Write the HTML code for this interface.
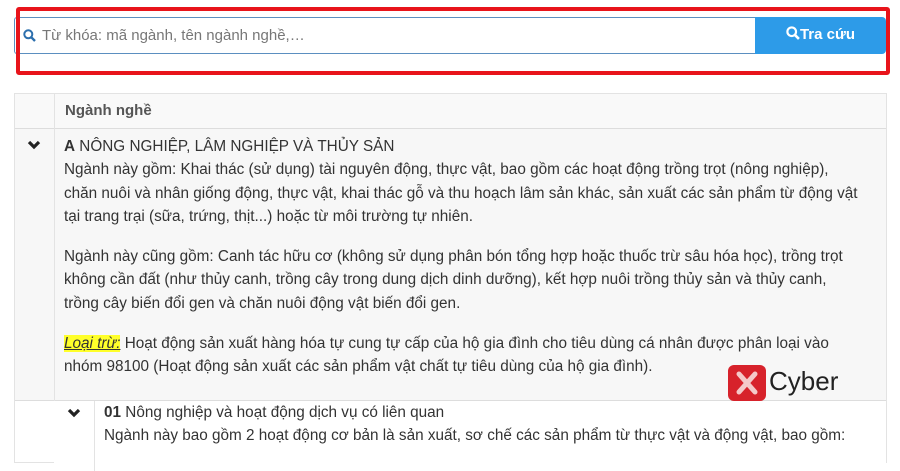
<!DOCTYPE html>
<html><head><meta charset="utf-8"><style>
*{box-sizing:border-box;margin:0;padding:0}
body{width:900px;height:450px;overflow:hidden;background:#fff;font-family:"Liberation Sans",Arial,sans-serif;color:#333;position:relative}
.red{position:absolute;left:16px;top:7px;width:874px;height:68px;border:4px solid #e8141b;border-radius:3px}
.inp{position:absolute;left:14px;top:17px;width:742px;height:37px;border:1px solid #5b8fc0;border-right:none;border-radius:3px 0 0 3px;background:#fff}
.inp span{position:absolute;left:27px;top:9px;font-size:15px;color:#777}
.btn{position:absolute;left:755px;top:17px;width:131px;height:37px;background:#2d9be8;border-radius:0 4px 4px 0;color:#fff;font-size:15px;font-weight:bold;text-align:center;line-height:36px}
.tbl{position:absolute;left:14px;top:93px;width:873px;height:370px;border:1px solid #e3e3e3}
.hd{position:absolute;left:0;top:0;width:871px;height:35px;background:#f9f9f9;border-bottom:1px solid #ddd}
.hd b{position:absolute;left:50px;top:8px;font-size:15px;color:#555}
.vl{position:absolute;left:39px;top:0;width:1px;height:307px;background:#e3e3e3}
.rowA{position:absolute;left:0;top:35px;width:871px;height:272px;background:#f7f7f7;border-bottom:1px solid #ddd}
.txt{position:absolute;left:49px;top:6px;width:812px;font-size:15.3px;line-height:23.3px}
.txt p{margin-bottom:17px}
.chev{position:absolute}
mark{background:#ffff2a;font-style:italic;text-decoration:underline;color:#333}
.rowB{position:absolute;left:39px;top:307px;width:832px;height:70px;background:#fff}
.vl2{position:absolute;left:40px;top:0;width:1px;height:70px;background:#e3e3e3}
.logo{position:absolute;left:728px;top:365px;width:38px;height:36px;background:#d7222b;border-radius:6px}
.cy{position:absolute;left:769px;top:366px;font-size:26px;color:#222;font-family:"Liberation Sans",sans-serif}
</style></head><body>
<div class="inp"><svg style="position:absolute;left:8px;top:11px" width="13" height="13" viewBox="0 0 13 13"><circle cx="5.3" cy="5.3" r="4" fill="none" stroke="#2c6fad" stroke-width="2"/><path d="M8.2 8.2L12 12" stroke="#2c6fad" stroke-width="2.4"/></svg><span>Từ khóa: mã ngành, tên ngành nghề,…</span></div>
<div class="btn"><svg style="vertical-align:-1px" width="14" height="14" viewBox="0 0 13 13"><circle cx="5.3" cy="5.3" r="4" fill="none" stroke="#fff" stroke-width="2"/><path d="M8.2 8.2L12 12" stroke="#fff" stroke-width="2.4"/></svg>Tra cứu</div>
<div class="red"></div>
<div class="tbl">
<div class="hd"><b>Ngành nghề</b></div>
<div class="rowA">
<svg class="chev" style="left:12px;top:11px" width="14" height="10" viewBox="0 0 14 10"><path d="M2 2L7 7L12 2" fill="none" stroke="#222" stroke-width="3.2"/></svg>
<div class="txt">
<p><b>A</b> NÔNG NGHIỆP, LÂM NGHIỆP VÀ THỦY SẢN<br>Ngành này gồm: Khai thác (sử dụng) tài nguyên động, thực vật, bao gồm các hoạt động trồng trọt (nông nghiệp),<br>chăn nuôi và nhân giống động, thực vật, khai thác gỗ và thu hoạch lâm sản khác, sản xuất các sản phẩm từ động vật<br>tại trang trại (sữa, trứng, thịt...) hoặc từ môi trường tự nhiên.</p>
<p>Ngành này cũng gồm: Canh tác hữu cơ (không sử dụng phân bón tổng hợp hoặc thuốc trừ sâu hóa học), trồng trọt<br>không cần đất (như thủy canh, trồng cây trong dung dịch dinh dưỡng), kết hợp nuôi trồng thủy sản và thủy canh,<br>trồng cây biến đổi gen và chăn nuôi động vật biến đổi gen.</p>
<p><mark>Loại trừ:</mark> Hoạt động sản xuất hàng hóa tự cung tự cấp của hộ gia đình cho tiêu dùng cá nhân được phân loại vào<br>nhóm 98100 (Hoạt động sản xuất các sản phẩm vật chất tự tiêu dùng của hộ gia đình).</p>
</div></div>
<div class="vl"></div>
<div class="rowB"><div class="vl2"></div>
<svg class="chev" style="left:13px;top:7px" width="14" height="10" viewBox="0 0 14 10"><path d="M2 2L7 7L12 2" fill="none" stroke="#222" stroke-width="3.2"/></svg>
<div class="txt" style="left:50px;top:0;width:790px;white-space:nowrap"><b>01</b> Nông nghiệp và hoạt động dịch vụ có liên quan<br>Ngành này bao gồm 2 hoạt động cơ bản là sản xuất, sơ chế các sản phẩm từ thực vật và động vật, bao gồm:</div>
</div>
</div>
<div class="logo"><svg width="38" height="36" viewBox="0 0 38 36"><path d="M11 9L27 27M27 9L11 27" stroke="#f4c9c9" stroke-width="5" stroke-linecap="round"/></svg></div>
<div class="cy">Cyber</div>
</body></html>
